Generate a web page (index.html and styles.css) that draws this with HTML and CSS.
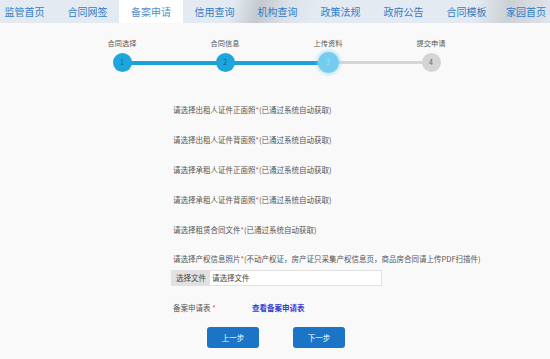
FILE: index.html
```html
<!DOCTYPE html>
<html lang="zh-cn">
<head>
  <meta charset="UTF-8" />
  <title>备案申请</title>
  <link rel="stylesheet" href="styles.css">
</head>
<body>
  <div class="nav">
    <a class="nav-item">监管首页</a>
    <a class="nav-item">合同网签</a>
    <a class="nav-item active">备案申请</a>
    <a class="nav-item">信用查询</a>
    <a class="nav-item">机构查询</a>
    <a class="nav-item">政策法规</a>
    <a class="nav-item">政府公告</a>
    <a class="nav-item">合同模板</a>
    <a class="nav-item">家园首页</a>
  </div>

  <div class="steps">
    <div class="step done">
      <span class="step-label">合同选择</span>
      <span class="step-dot">1</span>
    </div>
    <div class="step done">
      <span class="step-label">合同信息</span>
      <span class="step-dot">2</span>
    </div>
    <div class="step current">
      <span class="step-label">上传资料</span>
      <span class="step-dot">3</span>
    </div>
    <div class="step">
      <span class="step-label">提交申请</span>
      <span class="step-dot">4</span>
    </div>
  </div>

  <div class="form">
    <div class="row">请选择出租人证件正面照<span class="req">*</span>(已通过系统自动获取)</div>
    <div class="row">请选择出租人证件背面照<span class="req">*</span>(已通过系统自动获取)</div>
    <div class="row">请选择承租人证件正面照<span class="req">*</span>(已通过系统自动获取)</div>
    <div class="row">请选择承租人证件背面照<span class="req">*</span>(已通过系统自动获取)</div>
    <div class="row">请选择租赁合同文件<span class="req">*</span>(已通过系统自动获取)</div>
    <div class="row row-last">请选择产权信息照片<span class="req">*</span>(不动产权证，房产证只采集产权信息页，商品房合同请上传PDF扫描件)</div>
    <div class="file-box">
      <span class="file-btn">选择文件</span>
      <span class="file-name">请选择文件</span>
    </div>
    <div class="apply-row">
      <span class="apply-label">备案申请表 <span class="req">*</span></span>
      <a class="apply-link">查看备案申请表</a>
    </div>
    <div class="buttons">
      <button class="btn">上一步</button>
      <button class="btn">下一步</button>
    </div>
  </div>
</body>
</html>
```

FILE: styles.css
```css
* {
  margin: 0;
  padding: 0;
  box-sizing: border-box;
}
html, body {
  width: 100%;
  height: 100%;
  overflow: hidden;
}
body {
  font-family: "Noto Sans CJK SC", "Noto Sans", sans-serif;
  background: #f9f9f9;
  color: #555;
}
.nav {
  display: flex;
  height: 23px;
  overflow: hidden;
  background:
    linear-gradient(105deg, transparent 42%, rgba(140,140,140,0.35) 47%, rgba(190,190,190,0.2) 52%, transparent 57%),
    linear-gradient(100deg, transparent 86%, rgba(150,150,150,0.3) 92%, rgba(200,200,200,0.15) 100%),
    #e3eaf2;
}
.nav-item {
  flex: 0 0 63px;
  text-align: center;
  font-size: 10px;
  line-height: 23px;
  color: #2f7cc5;
}
.nav-item:first-child {
  margin-left: -7px;
}
.nav-item:last-child {
  flex-basis: 56px;
}
.nav-item.active {
  flex-basis: 64px;
  background: #fff;
  color: #5a8fc8;
}
.steps {
  display: flex;
  margin-left: 70.5px;
  margin-top: 16px;
}
.step {
  position: relative;
  width: 103px;
  display: flex;
  flex-direction: column;
  align-items: center;
}
.step-label {
  font-size: 7.2px;
  line-height: 9px;
  color: #555;
  height: 13px;
}
.step-dot {
  position: relative;
  z-index: 1;
  width: 19px;
  height: 19px;
  border-radius: 50%;
  margin-top: 1px;
  background: #d4d4d4;
  color: #666;
  font-size: 7px;
  line-height: 19px;
  text-align: center;
}
.step::after {
  content: "";
  position: absolute;
  left: 51.5px;
  width: 103px;
  top: 22px;
  height: 3px;
  background: #d6d6d6;
}
.step:last-child::after {
  display: none;
}
.step.done .step-dot {
  background: #1ea6dc;
  color: #0d5f83;
}
.step.done::after {
  top: 21.5px;
  height: 4px;
  background: #1ba1d8;
}
.step.current .step-dot {
  width: 21px;
  height: 21px;
  margin-top: 0;
  line-height: 21px;
  background: #74ccef;
  color: #a9def4;
  box-shadow: 0 0 3px 2px rgba(140,210,240,0.45);
}
.form {
  padding-left: 173px;
  margin-top: 22px;
  font-size: 7.5px;
}
.row {
  height: 30px;
  line-height: 30px;
  color: #555;
  white-space: nowrap;
}
.row-last {
  height: 25px;
  line-height: 27px;
}
.req {
  color: #e5483a;
}
.file-box {
  display: flex;
  align-items: stretch;
  width: 211px;
  height: 16px;
  margin-left: -2px;
  background: #fff;
  border: 1px solid #e2e2e2;
}
.file-btn {
  background: #e1e1e1;
  padding: 0 4px;
  line-height: 14px;
  color: #444;
}
.file-name {
  padding-left: 2px;
  line-height: 14px;
  color: #444;
}
.apply-row {
  display: flex;
  margin-top: 16px;
  line-height: 12px;
}
.apply-label {
  width: 79px;
  color: #555;
}
.apply-link {
  color: #3340cf;
  font-weight: bold;
}
.buttons {
  display: flex;
  gap: 34px;
  margin-left: 34px;
  margin-top: 13px;
}
.btn {
  width: 52px;
  height: 21px;
  border: none;
  border-radius: 3px;
  background: #1b74c6;
  color: #fff;
  font-family: inherit;
  font-size: 7.5px;
}
```
